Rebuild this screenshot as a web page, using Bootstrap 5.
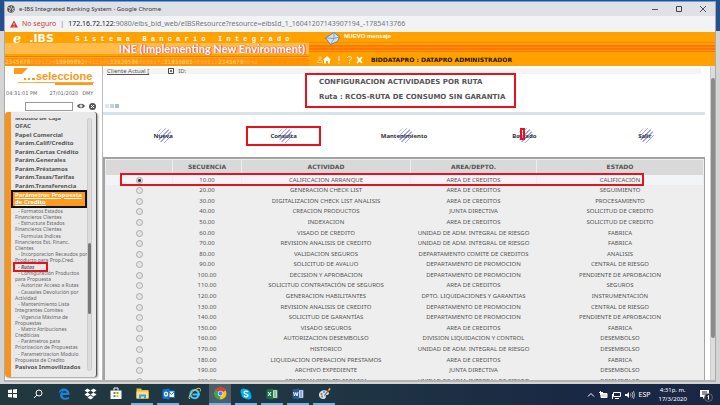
<!DOCTYPE html>
<html lang="es">
<head>
<meta charset="utf-8">
<meta name="viewport" content="width=device-width, initial-scale=1">
<title>e-IBS Integrated Banking System</title>
<link href="https://cdn.jsdelivr.net/npm/bootstrap@5.3.0/dist/css/bootstrap.min.css" rel="stylesheet">
<style>
html,body{height:100%}
body{font-family:"DejaVu Sans",Verdana,sans-serif;font-size:6px;line-height:8px;color:#555;background:linear-gradient(#25508f 31px,#d4d4d4 31px)}
a{color:inherit;text-decoration:none}
svg{display:block;flex:none}
.win{margin:1px 4px 2px;background:#fff;border:1px solid #aaa;border-top:1px solid #65a5df;border-bottom:2px solid #b4b4b4}
.tbar{height:14px;background:#dee1e6;font:6px/14px "Noto Sans",sans-serif;color:#333;padding-left:2px}
.tbar button,.side button,.tools button{border:0;background:none;padding:0;color:inherit;line-height:1}
.addr{height:16px;background:#f1f3f4;font:7px/16px "Noto Sans",sans-serif;color:#777;padding-left:5px}
.addr .warn{color:#d33a2c}
.addr b{font-weight:400;color:#222}
.brandbar{height:34px;background:#ffa200;color:#fff}
.brand{width:304px;background:linear-gradient(transparent 11px,#ffbc4b 11px,#ffbc4b 22px,#ffa200 22px,#ffa200 24px,#f47b00 24px,#f47b00 25px,#ffad29 25px,#ffad29 26px,#ff9300 26px)}
.brand .top-line{height:12px}
.brand .logo-e{font:italic 900 13px/14px "DejaVu Serif",serif}
.brand .logo-t{font:bold 11px/14px "DejaVu Sans",sans-serif;width:50px}
.brand .sys{font:bold 7px/8px "Liberation Mono",monospace;padding-top:3px}
.brand .ine{font:900 11px/10px Lato,sans-serif;text-shadow:0 0 1px #d33,1px 0 1px #e54}
.brand .digits{font:bold 6px/8px "DejaVu Sans Mono",monospace;color:#ffc56a}
.digits i{font-style:normal;color:#ffa53c}
.stripes{background:linear-gradient(transparent 10px,#ff8400 10px,#ff8400 11px,#ffa200 11px,#ffa200 13px,#ff7600 13px,#ff7600 15px,#ff9200 15px,#ff9200 16px,#ff7600 16px,#ff7600 18px,#ff9c00 18px,#ff9c00 19px,#ff7600 19px,#ff7600 20px,transparent 20px);padding-bottom:2px}
.msg{font:bold 6px/8px "Liberation Sans",sans-serif}
.user{color:#241500;font:bold 6px/8px "DejaVu Sans",sans-serif}
.side{width:98px;border-right:1px solid #bbb}
.pick{height:19px}
.sel{font:bold 11px/12px "Liberation Sans",sans-serif;color:#ff9616}
.when{font-size:5px;color:#666;padding-left:1px}
.finder{padding:1px 0 1px 20px}
.side input[type=text]{width:48px;height:9px;border:1px solid #999;padding:0;font-size:6px}
.panel{border-left:6px solid #f7941d;border-right:1px solid #555;border-radius:3px;background:#e9e9ea;margin-right:5px;box-shadow:1px 1px 2px #999;height:265px;padding:6px 4px 6px 0}
.menu{overflow:hidden;width:78px;height:253px;padding-left:4px}
.menu ul{margin:0;padding:0;list-style:none}
.menu .mods{font:bold 6px/8px "Noto Sans",sans-serif;white-space:nowrap}
.menu .upper{height:76px;margin-top:-4px}
.cur{display:block;background:#ff9a1a;color:#fff;font:bold 6px/7px "Noto Sans",sans-serif;text-decoration:underline;border:2px solid #111;margin-left:-4px;padding:0 0 0 2px;white-space:nowrap}
.menu .subs{height:155px;font:5px/6px "Noto Sans",sans-serif;color:#666}
.subs a{display:block;text-indent:3px}
.subs a.here{font-style:italic;text-decoration:underline;font-weight:bold;outline:2px solid #e8121c;width:31px}
.track{width:5px;background:#dcdcdc;border:1px solid #ccc;border-radius:3px}
.thumb{height:71px;margin-top:124px;background:#777;border-radius:2px}
.redbox{border:2px solid #e8121c}
.client{background:#f4f4f4;height:6px;font:6px/8px "Noto Sans",sans-serif;margin:2px 9px 0 0}
.client svg{margin-left:19px}
.heading-row{margin-top:-1px}
.ttl{font:bold 7px/15px "DejaVu Sans",sans-serif;padding:0 4px 1px 12px;width:211px;margin-left:186px;white-space:nowrap}
.rule{height:3px;background:#d8e2ea;margin:4px 5px 0 0}
.sq{padding-left:2px;gap:1px}
.sq i{width:4px;height:4px;background:#dfe5ee}
.sq i+i{background:#c4cfdf}
.sq i+i+i{background:#adbcd3}
.acts{height:42px;margin-right:5px}
.acts a{font:bold 6px/8px "Noto Sans",sans-serif;padding:5px 0;position:relative;z-index:0;color:#333}
.acts a::before{content:"";position:absolute;z-index:-1;left:50%;top:1px;width:15px;height:15px;border-radius:50%;margin-left:-6px;background:repeating-linear-gradient(135deg,#a3a4f4 0 1px,transparent 1px 3px)}
.acts a.btnbox{padding:4px 22px}
.acts a.btnbox::before{top:0}
.acts .chip{left:50%;top:1px;width:5px;height:12px;margin-left:-4px}
.grid{border:2px solid #a3a3a3;border-right-width:1px;border-bottom:0;background:#eee;margin-right:5px;height:224px;overflow:hidden}
.grid table{width:100%;height:227px;table-layout:fixed;border-collapse:separate;border-spacing:1px 0;margin-top:1px;text-align:center;font:6px/9px "Noto Sans",sans-serif;color:#555}
.grid th{background:#d9d9d9;font:bold 6px/8px "DejaVu Sans",sans-serif;color:#555;height:15px;padding:0}
.grid td{padding:0;height:9px;white-space:nowrap}
.grid tr.on td{background:#f2f4f8}
.c1{width:66px}.c2{width:68px}.c3{width:168px}.c4{width:125px}
.mark-row{left:15px;right:60px;top:14px;height:13px}
.grid input{appearance:none;display:block;width:7px;height:7px;border:1px solid #aaa;border-radius:50%;margin:1px auto;background:#e4e4e4}
.grid input:checked{background:radial-gradient(#333 0 1px,#ddd 2px)}
.vbar{width:5px;background:#ddd;border-left:1px solid #ccc}
.vbar div{margin-top:12px;height:260px;background:#8c8c8c;border-radius:2px}
.task{height:21px;background:linear-gradient(90deg,#22383f,#1f3643 45%,#192844 80%,#1b2645);color:#fff;padding-left:1px}
.task .ap{width:22px;height:21px;padding:0;margin-right:4px;border:0;border-bottom:2px solid transparent;background:none}
.task .ap svg{margin:auto}
.task .ap.open{border-color:#6fb5ea}
.task .ap.act{background:#4a5d68}
.tray{font:7px/9px "Noto Sans",sans-serif;padding-right:3px}
.tray .clock{font-size:6px;text-align:center}
</style>
</head>
<body class="d-flex flex-column overflow-hidden">
<main class="win flex-grow-1 d-flex flex-column overflow-hidden">
  <div class="tbar d-flex align-items-center">
    <svg class="me-1" width="8" height="8" viewBox="0 0 16 16"><circle cx="8" cy="8" r="7.5" fill="#555"/><path d="M2 5l4 1 1 3-2 1 1 4M9 2l-1 3 3 2 4-1M10 9l3 1-2 4" stroke="#e5e5e5" stroke-width="1.6" fill="none"/></svg>
    <span>e-IBS Integrated Banking System - Google Chrome</span>
    <div class="ms-auto d-flex me-2">
      <button class="me-3" aria-label="Minimizar"><svg width="8" height="8"><path d="M1 4.500h6" stroke="#555"/></svg></button>
      <button class="me-3" aria-label="Maximizar"><svg width="8" height="8"><path d="M1.500 1.500h5v5h-5z" stroke="#444" fill="none"/></svg></button>
      <button aria-label="Cerrar"><svg width="8" height="8"><path d="M1 1l6 6M7 1l-6 6" stroke="#555"/></svg></button>
    </div>
  </div>
  <div class="addr d-flex align-items-center">
    <svg width="8" height="8" viewBox="0 0 16 16"><path d="M8 1l8 14H0z" fill="#d33a2c"/><path d="M8 6v4M8 11.500v2" stroke="#fff" stroke-width="1.600"/></svg>
    <span class="warn ms-1">No seguro</span><span class="mx-1">|</span>
    <span><b>172.16.72.122</b>:9080/eibs_bid_web/eIBSResource?resource=eibsId_1_16041207143907194_-1785413766</span>
  </div>
  <header class="brandbar d-flex">
    <div class="brand d-flex flex-column overflow-hidden text-nowrap">
      <div class="top-line d-flex align-items-start"><span class="logo-e ms-2">e</span><span class="logo-t ms-1 ps-1">.IBS</span><span class="sys">S i s t e m a &nbsp; B a n c a r i o &nbsp; I n t e g r a d o</span></div>
      <div class="ine text-end pe-1 mb-auto">INE (Implementing New Environment)</div>
      <div class="digits">2345678<i>0001234</i>18909892<i>0412345</i>33920586<i>0000272</i>31038085<i>4000012</i>2345678<i>0042</i></div>
    </div>
    <div class="stripes flex-grow-1 d-flex flex-column justify-content-between tools">
      <div class="d-flex ms-3">
        <svg width="15" height="13" viewBox="0 0 30 26"><path d="M1 12L18 1l11 9-4 9-14 6z" fill="#cfe0f2" stroke="#4a6f9d" stroke-width="1.500"/><path d="M1 12l17 1L18 1M11 25l7-12 11-3" fill="none" stroke="#6c8fb8" stroke-width="1.500"/></svg>
        <a href="#" class="msg ms-1">NUEVO mensaje</a>
      </div>
      <div class="d-flex align-items-center ms-2">
        <svg width="6" height="7" viewBox="0 0 12 14"><circle cx="6" cy="4" r="2.500" fill="none" stroke="#fff"/><path d="M1 13c0-7 10-7 10 0z" fill="none" stroke="#fff"/></svg>
        <svg width="8" height="8" viewBox="0 0 16 16"><path d="M8 0l8 8h-2v7h-4v-5H6v5H2V8H0z" fill="#fff"/></svg>
        <svg class="ms-1" width="28" height="8" viewBox="0 0 28 8"><path d="M4 0v5M4 6.500v1" stroke="#fff"/><path d="M12.500 2c0-2 4-2 4 0s-2 1.500-2 3M14.500 6.500v1" fill="none" stroke="#fff"/><path d="M22 1l5 6M27 1l-5 6" stroke="#fff" stroke-width="1.800"/></svg>
        <span class="user ms-2">BIDDATAPRO : DATAPRO ADMINISTRADOR</span>
      </div>
    </div>
  </header>
  <div class="d-flex flex-grow-1 overflow-hidden">
    <aside class="side flex-shrink-0">
      <div class="pick d-flex align-items-end">
        <svg width="31" height="17" viewBox="0 0 31 17"><path d="M9 0h14l-6 6H9z" fill="#ff9a1c"/><g fill="#ff9616"><path d="M19 10h2v2h-2zM23 10h2v2h-2zM27 10h3v2h-3z"/></g><path d="M13 14.500h18" stroke="#ffb04a"/></svg>
        <div class="sel flex-grow-1">seleccione<svg width="60" height="3"><path d="M0 .5h58" stroke="#ffa63a"/><path d="M19 2h38" stroke="#ff9a1c" stroke-width="2"/></svg></div>
      </div>
      <div class="when d-flex pt-1 mb-1"><span>04:31:01 PM</span><span class="ms-2 ps-1">27/01/2020</span><span class="ms-1">DMY</span></div>
      <div class="finder d-flex align-items-center">
        <input type="text" aria-label="Buscar">
        <button class="ms-1" aria-label="Ver"><svg width="8" height="8" viewBox="0 0 16 16"><path d="M0 8c4-6 12-6 16 0-4 6-12 6-16 0z" fill="#555"/><circle cx="8" cy="8" r="3" fill="#fff"/><circle cx="8" cy="8" r="1" fill="#555"/></svg></button>
        <button class="ms-1" aria-label="Limpiar"><svg width="7" height="7" viewBox="0 0 14 14"><circle cx="7" cy="7" r="7" fill="#555"/><path d="M4 4l6 6M10 4l-6 6" stroke="#fff" stroke-width="2"/></svg></button>
      </div>
      <div class="panel d-flex justify-content-between">
        <nav class="menu">
          <ul class="mods upper d-flex flex-column justify-content-between">
            <li><a href="#">Módulo de Caja</a></li><li><a href="#">OFAC</a></li><li><a href="#">Papel Comercial</a></li><li><a href="#">Parám.Calif/Credito</a></li><li><a href="#">Parám.Cartas Crédito</a></li><li><a href="#">Parám.Generales</a></li><li><a href="#">Parám.Préstamos</a></li><li><a href="#">Parám.Tasas/Tarifas</a></li><li><a href="#">Parám.Transferencia</a></li>
          </ul>
          <a href="#" class="cur">Parámetros Propuesta<br>de Credito</a>
          <ul class="subs d-flex flex-column justify-content-between text-nowrap">
            <li><a href="#">- Formatos Estados<br>Financieros Clientes</a></li>
            <li><a href="#">- Estructura Estados<br>Financieros Clientes</a></li>
            <li><a href="#">- Formulas Indices<br>Financieros Est. Financ.<br>Clientes</a></li>
            <li><a href="#">- Incorporacion Recaudos por<br>Producto para Prop.Cred.</a></li>
            <li><a href="#" class="here">- Rutas</a></li>
            <li><a href="#">- Configuración Productos<br>para Propuesta</a></li>
            <li><a href="#">- Autorizar Acceso a Rutas</a></li>
            <li><a href="#">- Causales Devolución por<br>Actividad</a></li>
            <li><a href="#">- Mantenimiento Lista<br>Integrantes Comites</a></li>
            <li><a href="#">- Vigencia Máxima de<br>Propuestas</a></li>
            <li><a href="#">- Matriz Atribuciones<br>Crediticias</a></li>
            <li><a href="#">- Parámetros para<br>Priorizacion de Propuestas</a></li>
            <li><a href="#">- Parametrizacion Modulo<br>Propuesta de Credito</a></li>
          </ul>
          <ul class="mods"><li><a href="#">Pasivos Inmovilizados</a></li></ul>
        </nav>
        <div class="track"><div class="thumb"></div></div>
      </div>
    </aside>
    <section class="flex-grow-1 d-flex flex-column overflow-hidden">
      <div class="client d-flex align-items-center"><u class="ms-1">Cliente Actual [</u><svg width="6" height="6"><path d="M.5.5h5v5h-5zM3 2v2M2 3h2" fill="none" stroke="#444"/></svg><span class="ms-1">ID:</span></div>
      <div class="heading-row d-flex align-items-end">
        <div class="sq d-flex"><i></i><i></i><i></i></div>
        <h1 class="ttl redbox mb-0">CONFIGURACION ACTIVIDADES POR RUTA<br>Ruta : RCOS-RUTA DE CONSUMO SIN GARANTIA</h1>
      </div>
      <div class="rule"></div>
      <div class="acts row g-0 row-cols-5 align-items-center text-center">
        <div class="d-flex justify-content-center"><a href="#">Nueva</a></div>
        <div class="d-flex justify-content-center"><a href="#" class="btnbox redbox">Consulta</a></div>
        <div class="d-flex justify-content-center"><a href="#">Mantenimiento</a></div>
        <div class="d-flex justify-content-center"><a href="#">Borrado<span class="chip redbox position-absolute"></span></a></div>
        <div class="d-flex justify-content-center"><a href="#">Salir</a></div>
      </div>
      <div class="grid position-relative">
        <table>
          <colgroup><col class="c1"><col class="c2"><col class="c3"><col class="c4"><col></colgroup>
          <thead><tr><th></th><th>SECUENCIA</th><th>ACTIVIDAD</th><th>AREA/DEPTO.</th><th>ESTADO</th></tr></thead>
          <tbody id="rows"></tbody>
        </table>
        <div class="mark-row redbox position-absolute"></div>
      </div>
    </section>
    <div class="vbar flex-shrink-0"><div></div></div>
  </div>
</main>
<footer class="task d-flex align-items-center flex-shrink-0">
  <button class="ap" aria-label="Inicio"><svg width="9" height="9"><path d="M0 1l4-.5V4H0zM5 .4L9 0v4H5zM0 5h4v3.500L0 8zM5 5h4v4l-4-.5z" fill="#fff"/></svg></button>
  <button class="ap" aria-label="Buscar"><svg width="10" height="10"><circle cx="6" cy="4" r="3" fill="none" stroke="#fff"/><path d="M4 6L1 9" stroke="#fff"/></svg></button>
  <button class="ap" aria-label="Edge"><svg width="12" height="12" viewBox="0 0 24 24"><path d="M1 11C2 4 7 1 12 1c7 0 11 5 11 11v2H9c0 6 8 7 13 4v4c-6 3-18 2-18-8 0-4 3-7 6-8-5 0-8 3-9 5zM9 10h8c0-6-7-6-8 0z" fill="#1583e0"/></svg></button>
  <button class="ap" aria-label="Dropbox"><svg width="13" height="12" viewBox="0 0 26 24"><path d="M7 1l6 4-6 4-6-4zM19 1l6 4-6 4-6-4zM7 9l6 4-6 4-6-4zM19 9l6 4-6 4-6-4zM13 15l6 4-6 4-6-4z" fill="#fff"/></svg></button>
  <button class="ap" aria-label="Tienda"><svg width="12" height="13" viewBox="0 0 24 26"><path d="M8 7V2h8v5" fill="none" stroke="#fff" stroke-width="2"/><path d="M1 7h22v17H1z" fill="#fff"/><path d="M7 10h4v4H7z" fill="#f25022"/><path d="M13 10h4v4h-4z" fill="#7fba00"/><path d="M7 16h4v4H7z" fill="#00a4ef"/><path d="M13 16h4v4h-4z" fill="#ffb900"/></svg></button>
  <button class="ap open" aria-label="Explorador"><svg width="13" height="11" viewBox="0 0 26 22"><path d="M1 1h9l2 3h13v17H1z" fill="#f0b93a"/><path d="M1 7h24v14H1z" fill="#ffe08a"/><path d="M6 13h14v8h-4v-4h-6v4H6z" fill="#3aa0e8"/></svg></button>
  <button class="ap open" aria-label="Outlook"><svg width="13" height="12" viewBox="0 0 26 24"><path d="M13 6h12v13H13z" fill="#fff" stroke="#1275cb" stroke-width="2"/><path d="M13 7l6 6 6-6" fill="none" stroke="#1275cb" stroke-width="2"/><path d="M1 3l14-2v22L1 21z" fill="#1275cb"/><ellipse cx="8" cy="12" rx="3" ry="4" fill="none" stroke="#fff" stroke-width="2.500"/></svg></button>
  <button class="ap" aria-label="Internet Explorer"><svg width="13" height="13" viewBox="0 0 26 26"><path d="M21 17c-3 8-16 7-16-3s15-12 17 1H9" fill="none" stroke="#4cc3f2" stroke-width="4"/><path d="M3 24C-2 18 16 0 24 3c2 1 1 4 0 6" fill="none" stroke="#f5cc45" stroke-width="2"/></svg></button>
  <button class="ap open act" aria-label="Chrome"><svg width="13" height="13" viewBox="0 0 24 24"><circle cx="12" cy="12" r="11" fill="#fbc116"/><path d="M12 12L2.500 6.500A11 11 0 0 1 21.500 6.500z" fill="#e33b2e"/><path d="M12 12L2.500 6.500A11 11 0 0 0 11 23z" fill="#2da94f"/><circle cx="12" cy="12" r="5" fill="#fff"/><circle cx="12" cy="12" r="4" fill="#4086f4"/></svg></button>
  <button class="ap open" aria-label="Skype"><svg width="12" height="12" viewBox="0 0 24 24"><circle cx="12" cy="12" r="9.500" fill="#00aff0"/><circle cx="7" cy="7" r="6" fill="#00aff0"/><circle cx="17" cy="17" r="6" fill="#00aff0"/><path d="M16 8c-2-3-8-2-8 1 0 4 8 2 8 6 0 3-7 4-8 0" fill="none" stroke="#fff" stroke-width="2.500"/></svg></button>
  <button class="ap open" aria-label="Excel"><svg width="12" height="12" viewBox="0 0 24 24"><path d="M12 4h11v16H12z" fill="#fff" stroke="#1d7044" stroke-width="1.500"/><path d="M15 8h6M15 12h6M15 16h6" stroke="#1d7044" stroke-width="2"/><path d="M1 3l13-2v22L1 21z" fill="#1d7044"/><path d="M4 8l6 8M10 8l-6 8" stroke="#fff" stroke-width="2"/></svg></button>
  <button class="ap open" aria-label="Word"><svg width="12" height="12" viewBox="0 0 24 24"><path d="M12 4h11v16H12z" fill="#fff" stroke="#2b5797" stroke-width="1.500"/><path d="M15 8h6M15 12h6M15 16h6" stroke="#2b5797" stroke-width="2"/><path d="M1 3l13-2v22L1 21z" fill="#2b5797"/><path d="M3 8l2 8 2.500-7L10 16l2-8" fill="none" stroke="#fff" stroke-width="1.800"/></svg></button>
  <button class="ap open" aria-label="Paint"><svg width="13" height="13" viewBox="0 0 26 26"><path d="M2 17C1 8 12 4 19 8c5 4 3 8-2 8-3 1 1 5-3 7-5 3-11 0-12-6z" fill="#c9e4f5"/><circle cx="7" cy="14" r="2" fill="#e64a3b"/><circle cx="12" cy="10" r="2" fill="#3b8ee6"/><circle cx="8" cy="19" r="2" fill="#43a047"/><path d="M13 17L22 5" stroke="#a86232" stroke-width="2.500"/><path d="M20 5l4-4 1 4-3 3z" fill="#f0a04a"/></svg></button>
  <div class="tray ms-auto d-flex align-items-center">
    <svg class="me-1" width="8" height="8"><path d="M1 5.500l3-3 3 3" fill="none" stroke="#fff"/></svg>
    <svg class="me-1" width="9" height="8"><path d="M2 2.500h6v4H2z" fill="#ddd" stroke="#fff"/><path d="M0 1.500h4M1.500 0v4" stroke="#fff"/></svg>
    <svg class="me-1" width="9" height="8"><path d="M1.500 1.500h7v4h-7zM3 7.500h4M.5 3v5" fill="none" stroke="#fff"/></svg>
    <svg class="me-1" width="10" height="8"><path d="M0 3h2l2-2v6L2 5H0z" fill="#fff"/><path d="M5.500 2.500q1 1.500 0 3M7 1q2 3 0 6M8.500 0q2 4 0 8" fill="none" stroke="#ccc" stroke-width=".8"/></svg>
    <span class="me-2">ESP</span>
    <div class="clock me-2">4:31p. m.<br>17/3/2020</div>
    <svg class="ms-1 me-1" width="14" height="14" viewBox="0 0 14 14"><path d="M1 2h9v7H6l-2 2V9H1z" fill="#fff"/><path d="M3 4h5M3 6h5" stroke="#1b2645"/><circle cx="9.500" cy="9.500" r="4" fill="#222b3a" stroke="#888" stroke-width=".6"/><path d="M8.500 8.500l1-1v4" fill="none" stroke="#fff"/></svg>
  </div>
</footer>
<script src="https://cdn.jsdelivr.net/npm/bootstrap@5.3.0/dist/js/bootstrap.bundle.min.js"></script>
<script>
const rows=[
["CALIFICACION ARRANQUE","AREA DE CREDITOS","CALIFICACIÓN"],
["GENERACION CHECK LIST","AREA DE CREDITOS","SEGUIMIENTO"],
["DIGITALIZACION CHECK LIST ANALISIS","AREA DE CREDITOS","PROCESAMIENTO"],
["CREACION PRODUCTOS","JUNTA DIRECTIVA","SOLICITUD DE CREDITO"],
["INDEXACION","AREA DE CREDITOS","SOLICITUD DE CREDITO"],
["VISADO DE CREDITO","UNIDAD DE ADM. INTEGRAL DE RIESGO","FABRICA"],
["REVISION ANALISIS DE CREDITO","UNIDAD DE ADM. INTEGRAL DE RIESGO","FABRICA"],
["VALIDACION SEGUROS","DEPARTAMENTO COMITE DE CREDITOS","ANALISIS"],
["SOLICITUD DE AVALUO","DEPARTAMENTO DE PROMOCION","CENTRAL DE RIESGO"],
["DECISION Y APROBACION","DEPARTAMENTO DE PROMOCION","PENDIENTE DE APROBACION"],
["SOLICITUD CONTRATACIÓN DE SEGUROS","AREA DE CREDITOS","SEGUROS"],
["GENERACION HABILITANTES","DPTO. LIQUIDACIONES Y GARANTIAS","INSTRUMENTACIÓN"],
["REVISION ANALISIS DE CREDITO","DEPARTAMENTO DE PROMOCION","CENTRAL DE RIESGO"],
["SOLICITUD DE GARANTÍAS","DEPARTAMENTO DE PROMOCION","PENDIENTE DE APROBACION"],
["VISADO SEGUROS","AREA DE CREDITOS","FABRICA"],
["AUTORIZACION DESEMBOLSO","DIVISION LIQUIDACION Y CONTROL","DESEMBOLSO"],
["HISTORICO","UNIDAD DE ADM. INTEGRAL DE RIESGO","DESEMBOLSO"],
["LIQUIDACION OPERACION PRESTAMOS","AREA DE CREDITOS","FABRICA"],
["ARCHIVO EXPEDIENTE","JUNTA DIRECTIVA","DESEMBOLSO"],
["CONFIRMACION TELEFONICA","UNIDAD DE ADM. INTEGRAL DE RIESGO","DESEMBOLSO"]];
document.getElementById("rows").innerHTML=rows.map((r,i)=>{
const n=(i+1)*10+".00";
return `<tr class="${i?"":"on"}"><td><input type="radio" name="sec" aria-label="Secuencia ${n}" ${i?"":"checked"}></td><td>${n}</td><td>${r[0]}</td><td>${r[1]}</td><td>${r[2]}</td></tr>`}).join("");
</script>
</body>
</html>
